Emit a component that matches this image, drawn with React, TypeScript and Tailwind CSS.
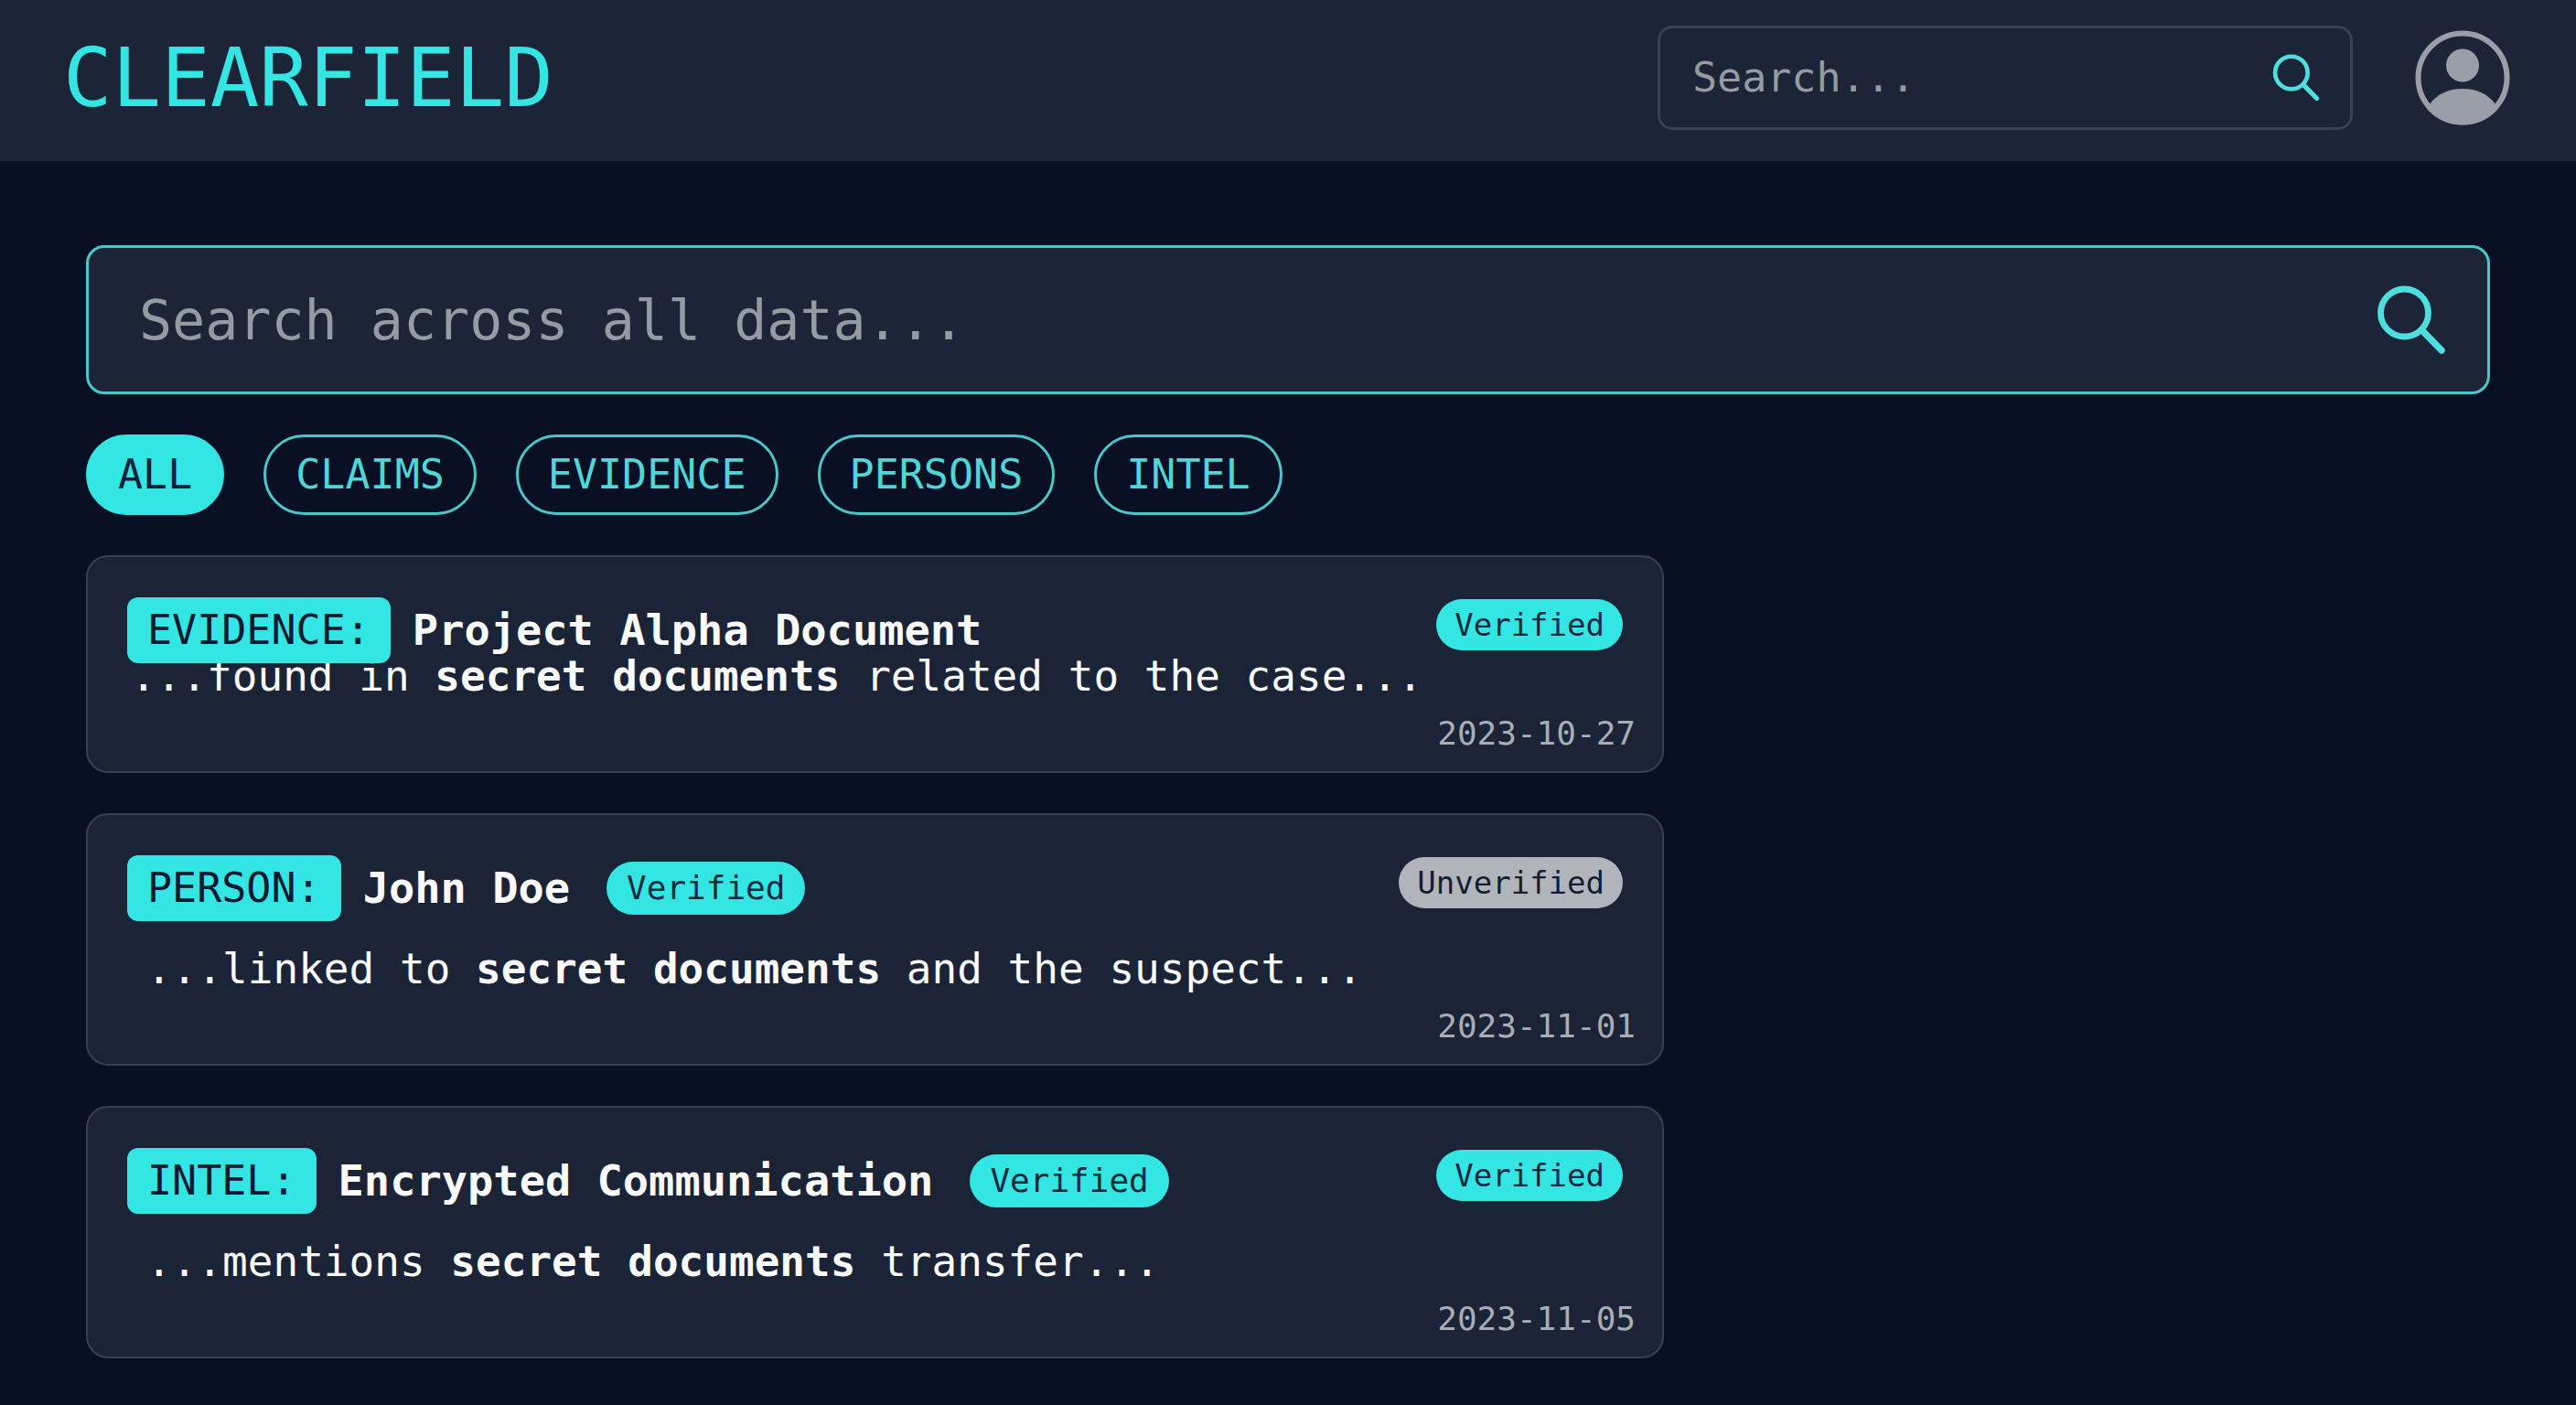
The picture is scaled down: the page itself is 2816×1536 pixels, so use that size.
import React, { useState } from 'react';

interface Result {
  id: number;
  type: string;
  title: string;
  before: string;
  match: string;
  after: string;
  date: string;
  status: 'Verified' | 'Unverified';
  titleBadge?: string;
  compact?: boolean;
}

const filters = ['ALL', 'CLAIMS', 'EVIDENCE', 'PERSONS', 'INTEL'];

const results: Result[] = [
  {
    id: 1,
    type: 'EVIDENCE',
    title: 'Project Alpha Document',
    before: '...found in ',
    match: 'secret documents',
    after: ' related to the case...',
    date: '2023-10-27',
    status: 'Verified',
    compact: true,
  },
  {
    id: 2,
    type: 'PERSON',
    title: 'John Doe',
    before: '...linked to ',
    match: 'secret documents',
    after: ' and the suspect...',
    date: '2023-11-01',
    status: 'Unverified',
    titleBadge: 'Verified',
  },
  {
    id: 3,
    type: 'INTEL',
    title: 'Encrypted Communication',
    before: '...mentions ',
    match: 'secret documents',
    after: ' transfer...',
    date: '2023-11-05',
    status: 'Verified',
    titleBadge: 'Verified',
  },
];

function SearchIcon({ className }: { className: string }) {
  return (
    <svg viewBox="0 0 76 76" fill="none" stroke="currentColor" strokeLinecap="round" className={className}>
      <circle cx="30.5" cy="30" r="26" strokeWidth="6.8" />
      <path d="M50 49.5L71 71" strokeWidth="7.5" />
    </svg>
  );
}

function AvatarIcon() {
  return (
    <svg viewBox="0 0 104 104" className="size-[104px]">
      <clipPath id="avatar">
        <circle cx="52" cy="52" r="51.5" />
      </clipPath>
      <circle cx="52" cy="52" r="48.5" fill="none" stroke="currentColor" strokeWidth="6" />
      <circle cx="52" cy="38.5" r="18" fill="currentColor" />
      <path
        d="M16 81C24 70 36 64 52 64S80 70 88 81L104 104H0Z"
        fill="currentColor"
        clipPath="url(#avatar)"
      />
    </svg>
  );
}

function ResultCard({ result }: { result: Result }) {
  return (
    <article className="flex flex-col rounded-3xl border-2 border-[#364252] bg-[#1a2436] pt-[44px] pb-[19px]">
      <div className="flex items-start justify-between px-[43px]">
        <div className="flex items-center">
          <span className="relative z-10 rounded-xl bg-[#33e6e4] px-[22px] text-[45px] leading-[72px] text-[#0e1830]">
            {result.type}:
          </span>
          <h2 className="ml-6 text-[47px] leading-[56px] font-bold text-[#fafafa]">{result.title}</h2>
          {result.titleBadge && (
            <span className="ml-10 rounded-full bg-[#33e6e4] px-[22px] text-[36px] leading-[58px] text-[#16283c]">
              {result.titleBadge}
            </span>
          )}
        </div>
        <span
          className={`mt-[2px] rounded-full px-5 text-[34px] leading-[56px] ${
            result.status === 'Verified' ? 'bg-[#33e6e4] text-[#16283c]' : 'bg-[#b1b5bb] text-[#131d33]'
          }`}
        >
          {result.status}
        </span>
      </div>

      {/* Matched excerpt */}
      <p
        className={`text-[46px] leading-[56px] text-[#fafafa] ${
          result.compact ? '-mt-[14px] px-[47px]' : 'mt-6 px-[64px]'
        }`}
      >
        {result.before}
        <strong>{result.match}</strong>
        {result.after}
      </p>

      <time dateTime={result.date} className="mt-[13px] mr-[29px] self-end text-[36px] leading-[44px] text-[#a9adb5]">
        {result.date}
      </time>
    </article>
  );
}

export default function App() {
  const [active, setActive] = useState('ALL');

  return (
    <div className="min-h-screen bg-[#091024] font-['DejaVu_Sans_Mono',monospace]">
      {/* Header */}
      <header className="flex h-[176px] items-center justify-between bg-[#1b2537] pr-[72px] pb-[6px] pl-[69px]">
        <h1 className="text-[89px] leading-[104px] text-[#33e6e4]">CLEARFIELD</h1>
        <div className="flex items-center gap-[68px]">
          <form className="flex h-[114px] w-[760px] items-center rounded-2xl border-[3px] border-[#374253] pr-[33px] pl-[35px]">
            <input
              type="text"
              aria-label="Search"
              placeholder="Search..."
              className="min-w-0 flex-1 bg-transparent text-[45px] leading-[56px] text-white outline-none placeholder:text-[#959aa3]"
            />
            <button type="button" aria-label="Submit search" className="text-[#4fdedf]">
              <SearchIcon className="size-[52px]" />
            </button>
          </form>
          <button type="button" aria-label="Account" className="text-[#9a9ea7]">
            <AvatarIcon />
          </button>
        </div>
      </header>

      <main className="flex flex-col gap-11 px-[94px] pt-[92px] pb-[50px]">
        <form className="flex h-[163px] items-center rounded-[20px] border-[3px] border-[#4cc6c8] bg-[#1b2537] pr-[45px] pl-[55px]">
          <input
            type="text"
            aria-label="Search across all data"
            placeholder="Search across all data..."
            className="min-w-0 flex-1 bg-transparent text-[60px] leading-[76px] text-white outline-none placeholder:text-[#959aa3]"
          />
          <button type="button" aria-label="Submit full search" className="text-[#4fdedf]">
            <SearchIcon className="size-[76px]" />
          </button>
        </form>

        {/* Filters */}
        <div className="flex flex-wrap gap-[43px]">
          {filters.map((name) => (
            <button
              key={name}
              type="button"
              onClick={() => setActive(name)}
              className={`rounded-full border-[3px] px-8 text-[45px] leading-[82px] ${
                active === name
                  ? 'border-[#33e6e4] bg-[#33e6e4] text-[#10203a]'
                  : 'border-[#4cc6c8] text-[#4fd6d8]'
              }`}
            >
              {name}
            </button>
          ))}
        </div>

        {/* Results */}
        <section className="flex w-full max-w-[1725px] flex-col gap-11">
          {results.map((result) => (
            <ResultCard key={result.id} result={result} />
          ))}
        </section>
      </main>
    </div>
  );
}
